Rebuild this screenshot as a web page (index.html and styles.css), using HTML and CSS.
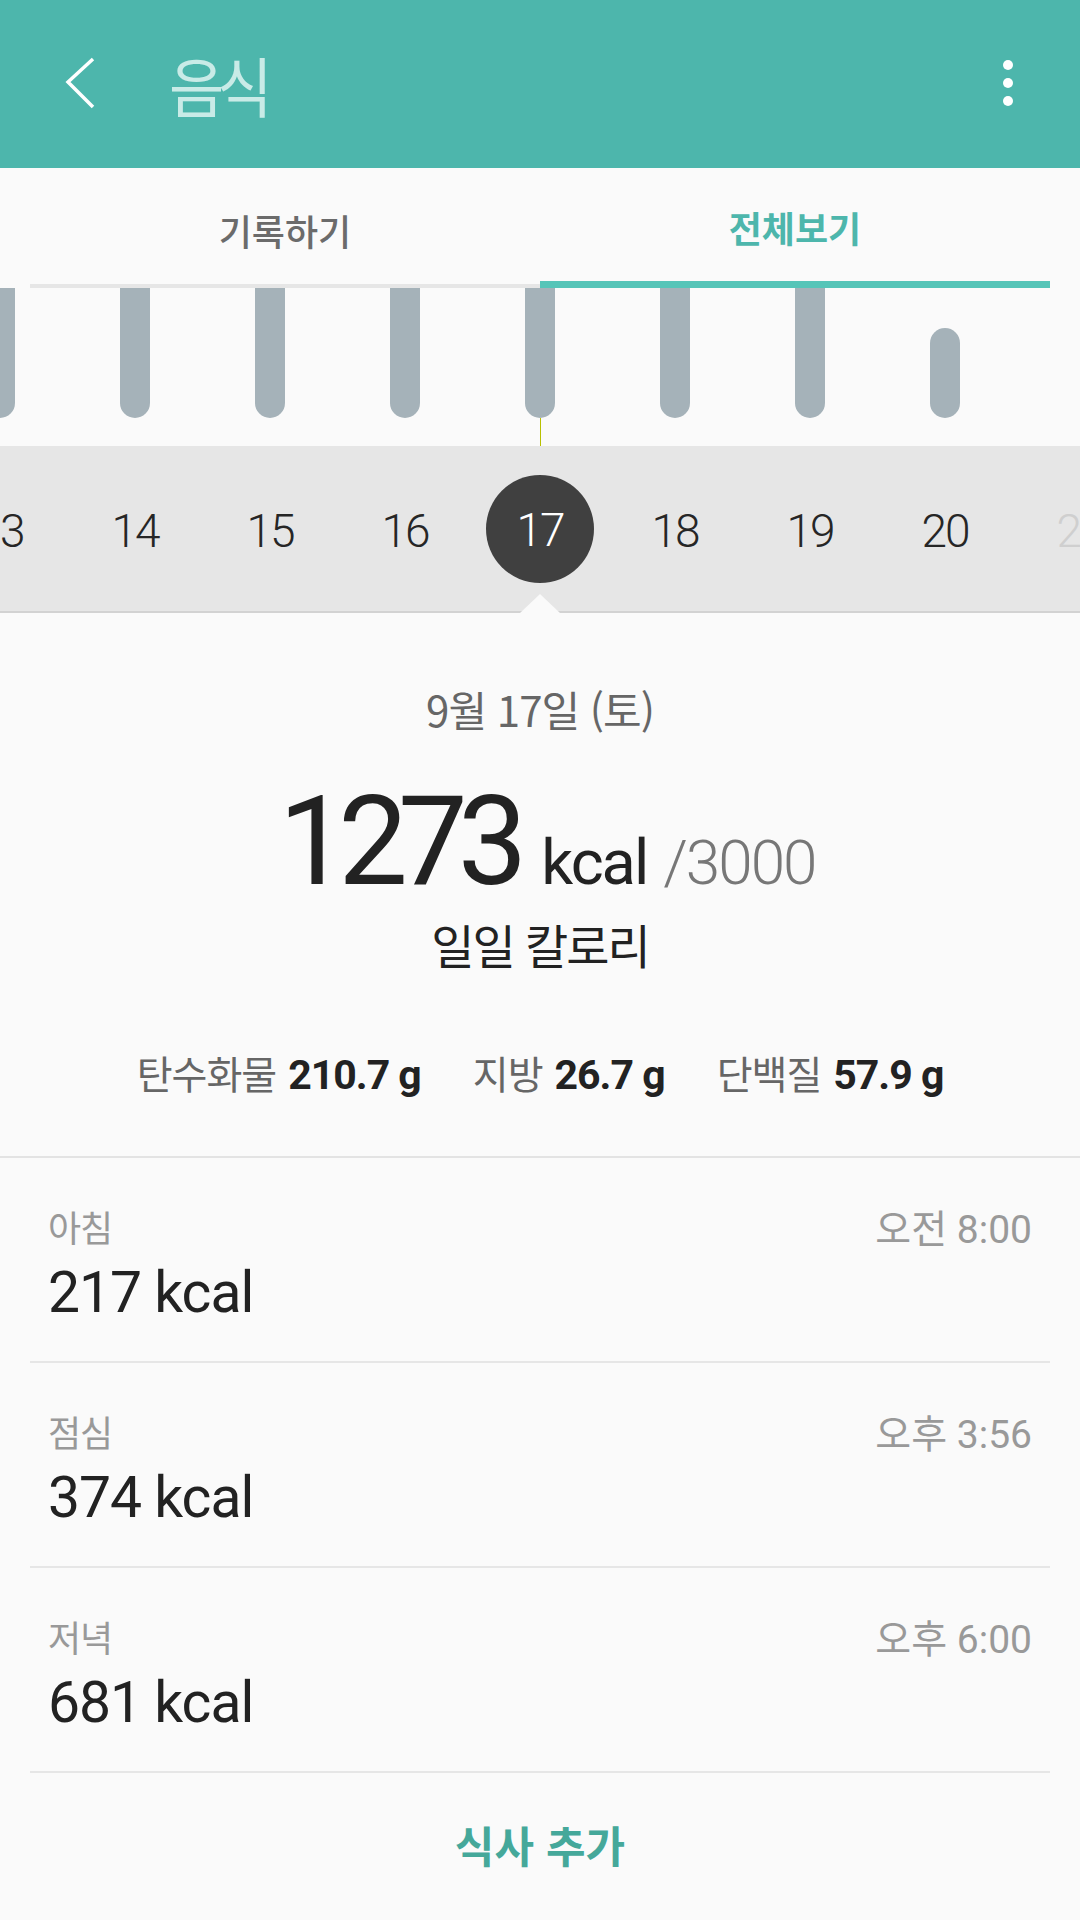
FILE: index.html
```html
<!DOCTYPE html>
<html lang="ko">
<head>
<meta charset="utf-8">
<title>음식</title>
<link rel="stylesheet" href="styles.css">
</head>
<body>
<div class="app">
  <header class="appbar">
    <svg class="back" width="32" height="52" viewBox="0 0 32 52"><polyline points="28,2 3,25 28,50" fill="none" stroke="#ffffff" stroke-width="3.5"/></svg>
    <h1 class="title">음식</h1>
    <div class="more"><span></span><span></span><span></span></div>
  </header>

  <nav class="tabs">
    <div class="tab">기록하기</div>
    <div class="tab active">전체보기</div>
  </nav>

  <div class="chart">
    <div class="bars">
      <div class="slot"><div class="bar"></div></div>
      <div class="slot"><div class="bar"></div></div>
      <div class="slot"><div class="bar"></div></div>
      <div class="slot"><div class="bar"></div></div>
      <div class="slot"><div class="bar"></div></div>
      <div class="slot"><div class="bar"></div></div>
      <div class="slot"><div class="bar"></div></div>
      <div class="slot"><div class="bar short"></div></div>
      <div class="slot"></div>
    </div>
    <div class="marker"></div>
  </div>

  <div class="dates">
    <div class="day">13</div>
    <div class="day">14</div>
    <div class="day">15</div>
    <div class="day">16</div>
    <div class="day selected"><span>17</span></div>
    <div class="day">18</div>
    <div class="day">19</div>
    <div class="day">20</div>
    <div class="day future">21</div>
    <div class="notch"></div>
  </div>

  <section class="summary">
    <div class="date">9월 17일 (토)</div>
    <div class="total"><span class="big">1273</span><span class="unit">kcal</span><span class="goal">/3000</span></div>
    <div class="caption">일일 칼로리</div>
    <div class="nutrients">
      <span class="nut"><span class="nl">탄수화물</span><b>210.7 g</b></span>
      <span class="nut"><span class="nl">지방</span><b>26.7 g</b></span>
      <span class="nut"><span class="nl">단백질</span><b>57.9 g</b></span>
    </div>
  </section>

  <ul class="meals">
    <li class="meal">
      <div class="meal-top"><span class="meal-name">아침</span><span class="meal-time">오전 8:00</span></div>
      <div class="meal-kcal">217 kcal</div>
    </li>
    <li class="meal">
      <div class="meal-top"><span class="meal-name">점심</span><span class="meal-time">오후 3:56</span></div>
      <div class="meal-kcal">374 kcal</div>
    </li>
    <li class="meal">
      <div class="meal-top"><span class="meal-name">저녁</span><span class="meal-time">오후 6:00</span></div>
      <div class="meal-kcal">681 kcal</div>
    </li>
  </ul>

  <div class="add">식사 추가</div>
</div>
</body>
</html>
```

FILE: styles.css
```css
* { box-sizing: border-box; }
html, body { margin: 0; padding: 0; }
body {
  width: 1080px;
  height: 1920px;
  background: #fafafa;
  font-family: "Roboto", "Noto Sans CJK KR", sans-serif;
  overflow: hidden;
}
.app { width: 1080px; overflow: hidden; }

.appbar {
  height: 168px;
  background: #4db6ac;
  display: flex;
  align-items: center;
  padding-left: 65px;
}
.back { flex: none; margin-top: -2px; }
.title {
  margin: 0 0 0 72px;
  font-family: "Noto Sans CJK KR", sans-serif;
  font-weight: 400;
  font-size: 60px;
  line-height: 66px;
  color: #c9ebe7;
  letter-spacing: -7px;
  flex: 1;
  transform: scaleY(1.08);
}
.more {
  width: 10px;
  margin-right: 67px;
  display: flex;
  flex-direction: column;
  gap: 8px;
  margin-top: -2px;
}
.more span {
  width: 10px;
  height: 10px;
  border-radius: 50%;
  background: #ffffff;
}

.tabs {
  display: flex;
  padding: 0 30px;
  height: 120px;
}
.tab {
  flex: 1;
  display: flex;
  align-items: center;
  justify-content: center;
  padding-top: 8px;
  font-family: "Noto Sans CJK KR", sans-serif;
  font-size: 36px;
  font-weight: 500;
  color: #6b6b6b;
  border-bottom: 4px solid #e6e6e6;
  letter-spacing: 0;
}
.tab.active {
  color: #4db6ac;
  font-weight: 700;
  border-bottom: 7px solid #56c5b8;
  padding-top: 5px;
}

.chart {
  height: 158px;
  position: relative;
}
.bars {
  display: flex;
  align-items: flex-end;
  height: 130px;
  margin-left: -67.5px;
}
.slot {
  width: 135px;
  flex: none;
  display: flex;
  justify-content: center;
  align-items: flex-end;
  height: 130px;
}
.bar {
  width: 30px;
  height: 130px;
  background: #a5b2b9;
  border-radius: 0 0 15px 15px;
}
.bar.short {
  height: 90px;
  border-radius: 15px;
}
.marker {
  position: absolute;
  left: 540px;
  top: 130px;
  width: 1px;
  height: 28px;
  background: #b8c000;
}

.dates {
  position: relative;
  height: 167px;
  background: #e6e6e6;
  border-bottom: 2px solid #d2d2d2;
  display: flex;
  align-items: center;
  margin-left: -67.5px;
  width: 1215px;
}
.day {
  width: 135px;
  flex: none;
  text-align: center;
  font-size: 46px;
  font-weight: 300;
  color: #262626;
  letter-spacing: -2px;
  padding-top: 4px;
}
.day.future { color: #cfcfcf; }
.day.selected {
  display: flex;
  justify-content: center;
  padding-top: 0;
}
.day.selected span {
  width: 108px;
  height: 108px;
  border-radius: 50%;
  background: #404040;
  color: #ffffff;
  display: flex;
  align-items: center;
  justify-content: center;
  padding-top: 2px;
}
.notch {
  position: absolute;
  left: 587.5px;
  bottom: -2px;
  width: 0;
  height: 0;
  border-left: 20px solid transparent;
  border-right: 20px solid transparent;
  border-bottom: 19px solid #fafafa;
}

.summary {
  display: flex;
  flex-direction: column;
  align-items: center;
  padding-top: 66px;
  height: 545px;
  border-bottom: 2px solid #e3e3e3;
}
.date {
  font-family: "Noto Sans CJK KR", sans-serif;
  font-size: 42px;
  line-height: 60px;
  color: #666666;
  letter-spacing: -1px;
}
.total {
  display: flex;
  align-items: baseline;
  margin-top: 38px;
  line-height: 130px;
  margin-left: 14px;
}
.big {
  font-size: 124px;
  font-weight: 400;
  color: #222222;
  letter-spacing: -10px;
}
.unit {
  font-size: 63px;
  color: #222222;
  margin-left: 24px;
  letter-spacing: -2px;
}
.goal {
  font-size: 62px;
  color: #777777;
  font-weight: 300;
  margin-left: 16px;
  letter-spacing: -2px;
}
.caption {
  font-family: "Noto Sans CJK KR", sans-serif;
  font-size: 47px;
  line-height: 60px;
  color: #222222;
  margin-top: -14px;
  letter-spacing: -2px;
}
.nutrients {
  display: flex;
  gap: 52px;
  margin-top: 70px;
  align-items: baseline;
}
.nut { display: flex; align-items: baseline; }
.nl {
  font-family: "Noto Sans CJK KR", sans-serif;
  font-size: 39px;
  color: #666666;
  margin-right: 12px;
  letter-spacing: -1px;
}
.nut b {
  font-size: 41px;
  font-weight: 700;
  color: #222222;
  letter-spacing: -1px;
}

.meals {
  list-style: none;
  margin: 0;
  padding: 0 30px;
}
.meal {
  height: 205px;
  border-bottom: 2px solid #e6e6e6;
  padding: 46px 18px 0 18px;
}
.meal-top {
  display: flex;
  justify-content: space-between;
  align-items: center;
  height: 44px;
}
.meal-name {
  font-family: "Noto Sans CJK KR", sans-serif;
  font-size: 36px;
  color: #999999;
  letter-spacing: -1px;
}
.meal-time {
  font-size: 39px;
  color: #999999;
  font-weight: 400;
  letter-spacing: 0;
}
.meal-kcal {
  font-size: 57px;
  color: #222222;
  margin-top: 14px;
  line-height: 62px;
  letter-spacing: -1px;
}

.add {
  text-align: center;
  font-family: "Noto Sans CJK KR", sans-serif;
  font-size: 43px;
  font-weight: 700;
  color: #45a89a;
  padding-top: 40px;
  letter-spacing: 0;
}
```
